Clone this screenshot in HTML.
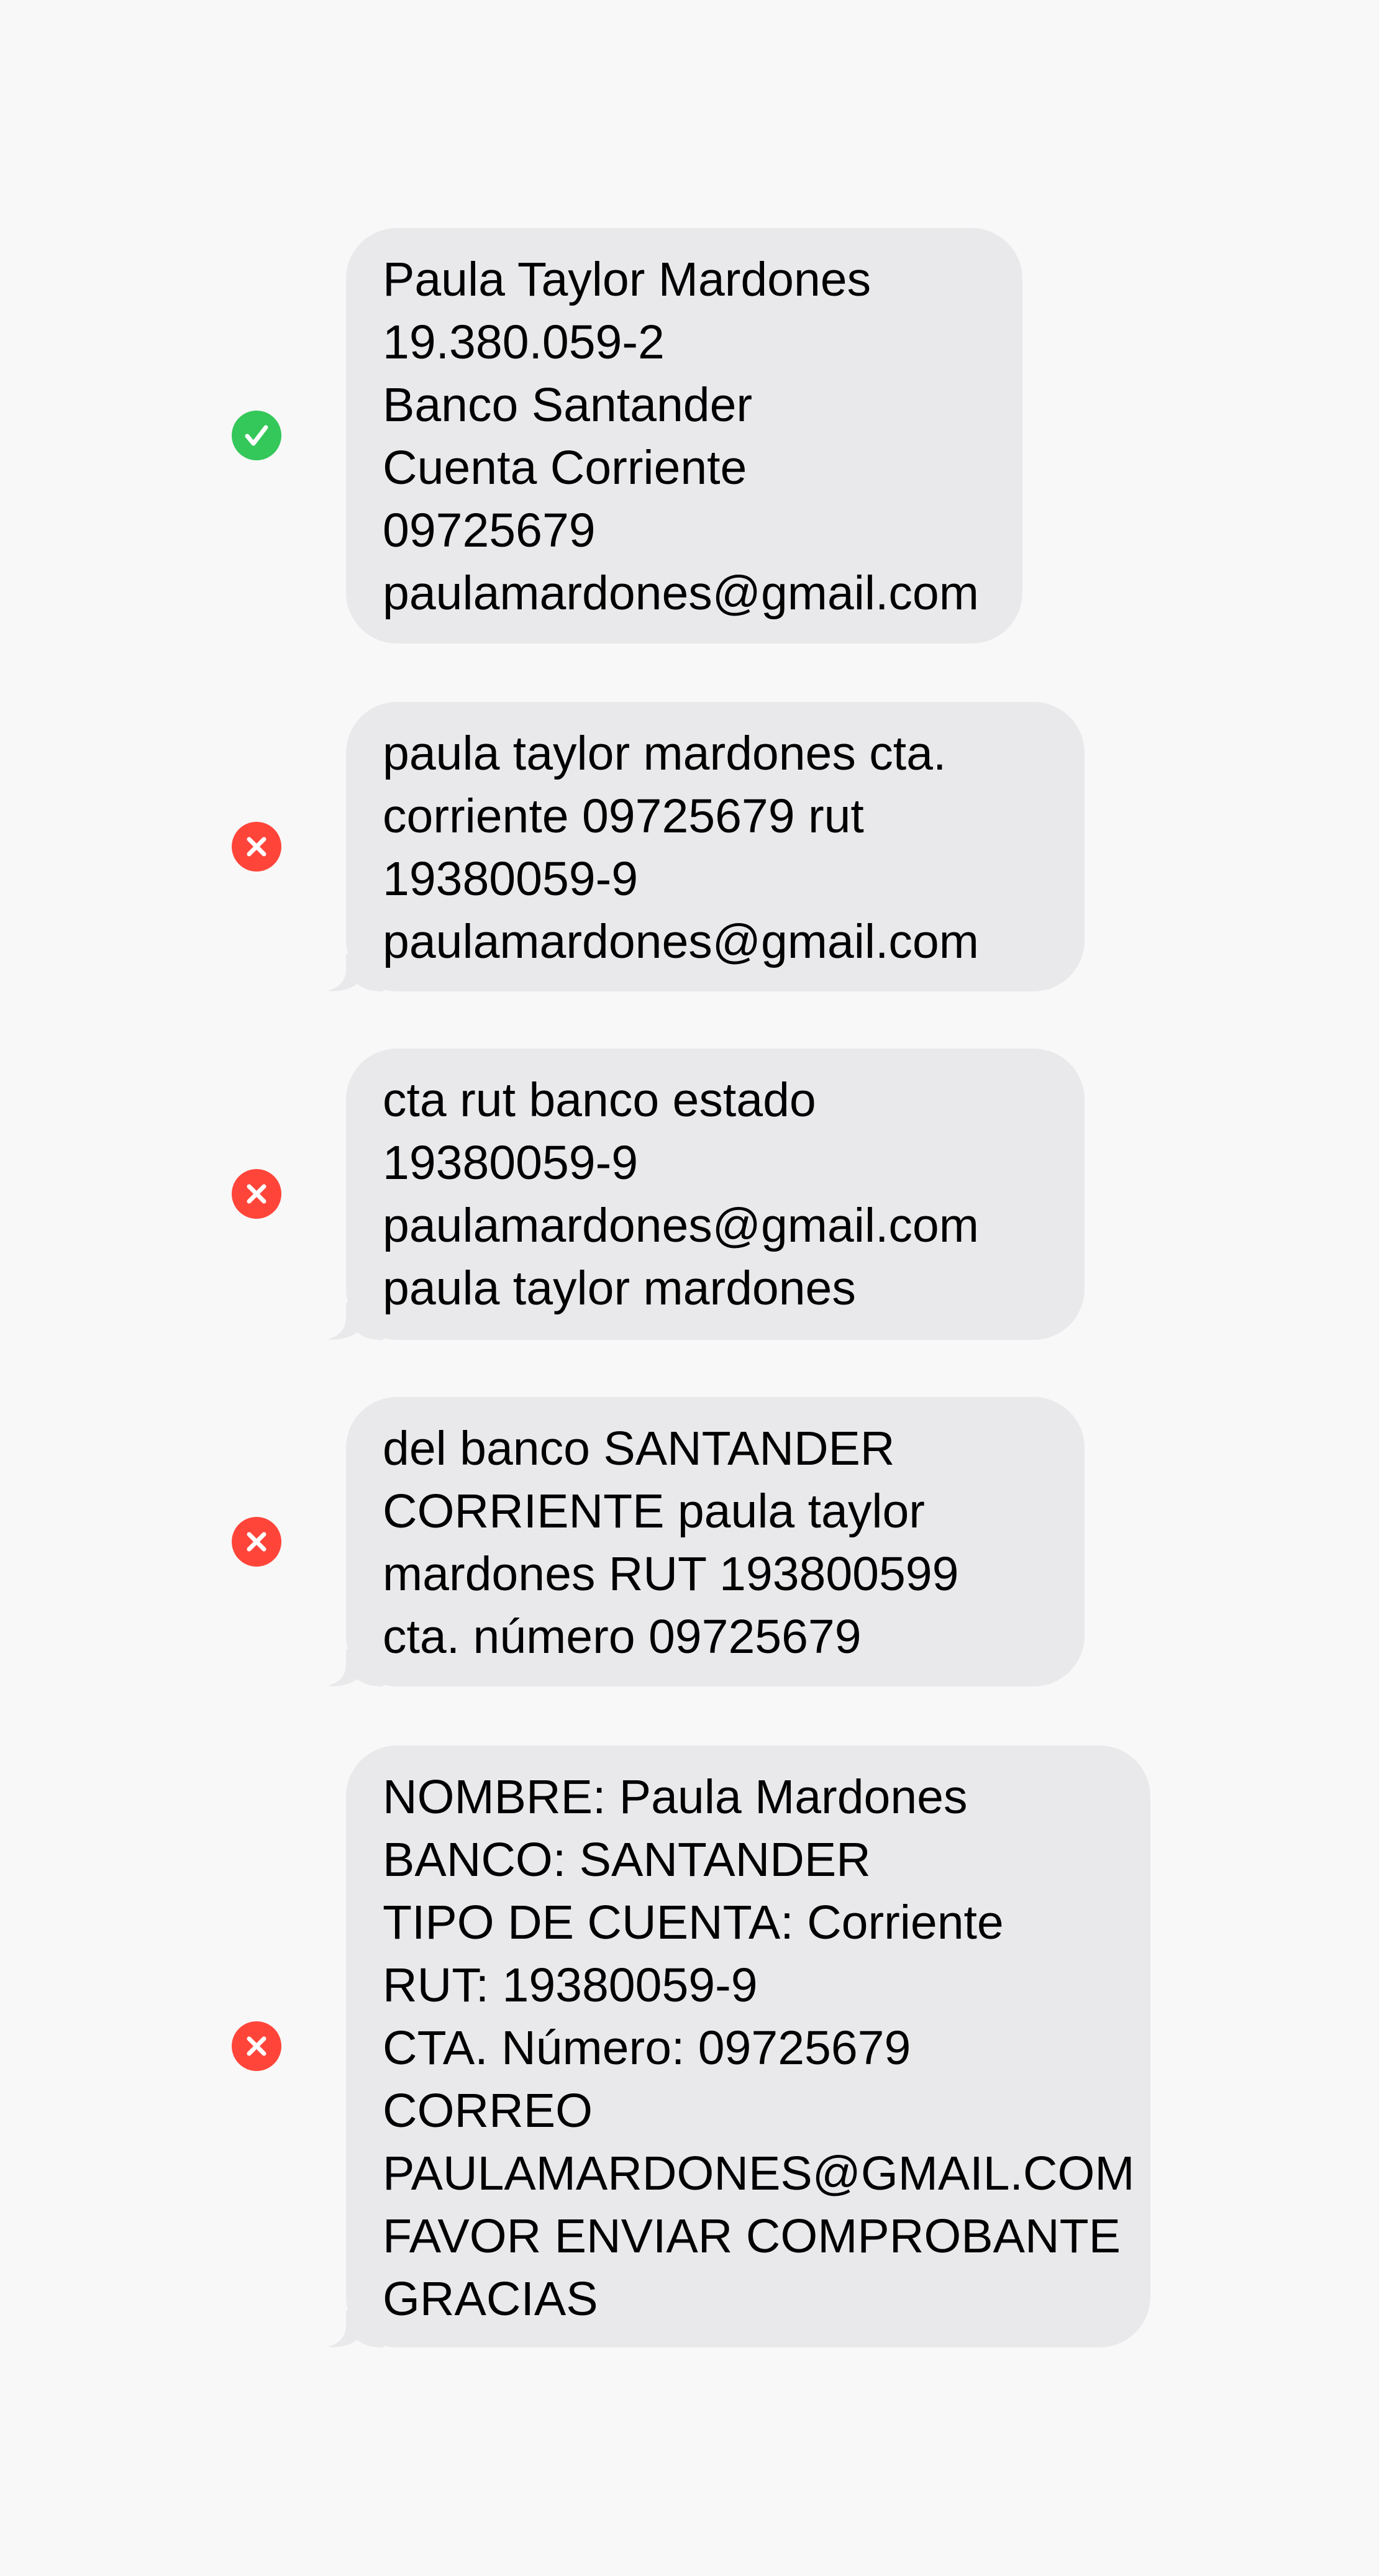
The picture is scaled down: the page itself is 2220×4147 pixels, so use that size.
<!DOCTYPE html>
<html><head><meta charset="utf-8">
<style>
html,body{margin:0;padding:0}
body{width:2220px;height:4147px;background:#f8f8f8;position:relative;font-family:"Liberation Sans",sans-serif;overflow:hidden}
.b{position:absolute;left:557px;background:#e9e9eb;border-radius:82px;box-sizing:border-box;padding:33px 0 31px 59px;font-size:77px;line-height:101px;color:#000;white-space:pre}
.t{position:absolute;left:-30px;bottom:0;width:90px;height:60px}
.i{position:absolute;left:373px;width:80px;height:80px;margin-top:-40px}
</style></head><body>

<div class="b" style="top:367px;width:1089px;height:669px">Paula Taylor Mardones
19.380.059-2
Banco Santander
Cuenta Corriente
09725679
paulamardones@gmail.com</div>

<div class="b" style="top:1130px;width:1189px;height:466px">paula taylor mardones cta.
corriente 09725679 rut
19380059-9
paulamardones@gmail.com<svg class="t" viewBox="0 0 90 60"><path d="M30 0 L30 24 C30 42 20 54 0 59 C18 61 36 57 48 48 C58 56 70 60 90 60 L90 0 Z" fill="#e9e9eb"/></svg></div>

<div class="b" style="top:1688px;width:1189px;height:469px">cta rut banco estado
19380059-9
paulamardones@gmail.com
paula taylor mardones<svg class="t" viewBox="0 0 90 60"><path d="M30 0 L30 24 C30 42 20 54 0 59 C18 61 36 57 48 48 C58 56 70 60 90 60 L90 0 Z" fill="#e9e9eb"/></svg></div>

<div class="b" style="top:2249px;width:1189px;height:466px">del banco SANTANDER
CORRIENTE paula taylor
mardones RUT 193800599
cta. número 09725679<svg class="t" viewBox="0 0 90 60"><path d="M30 0 L30 24 C30 42 20 54 0 59 C18 61 36 57 48 48 C58 56 70 60 90 60 L90 0 Z" fill="#e9e9eb"/></svg></div>

<div class="b" style="top:2810px;width:1295px;height:969px">NOMBRE: Paula Mardones
BANCO: SANTANDER
TIPO DE CUENTA: Corriente
RUT: 19380059-9
CTA. Número: 09725679
CORREO
PAULAMARDONES@GMAIL.COM
FAVOR ENVIAR COMPROBANTE
GRACIAS<svg class="t" viewBox="0 0 90 60"><path d="M30 0 L30 24 C30 42 20 54 0 59 C18 61 36 57 48 48 C58 56 70 60 90 60 L90 0 Z" fill="#e9e9eb"/></svg></div>

<svg class="i" style="top:701px" viewBox="0 0 80 80"><circle cx="40" cy="40" r="40" fill="#34c759"/><path d="M25 41 L35 53 L55 27" stroke="#fff" stroke-width="7" fill="none" stroke-linecap="round" stroke-linejoin="round"/></svg>
<svg class="i" style="top:1363px" viewBox="0 0 80 80"><circle cx="40" cy="40" r="40" fill="#ff453a"/><path d="M28 28 L52 52 M52 28 L28 52" stroke="#fff" stroke-width="7" stroke-linecap="round"/></svg>
<svg class="i" style="top:1922px" viewBox="0 0 80 80"><circle cx="40" cy="40" r="40" fill="#ff453a"/><path d="M28 28 L52 52 M52 28 L28 52" stroke="#fff" stroke-width="7" stroke-linecap="round"/></svg>
<svg class="i" style="top:2482px" viewBox="0 0 80 80"><circle cx="40" cy="40" r="40" fill="#ff453a"/><path d="M28 28 L52 52 M52 28 L28 52" stroke="#fff" stroke-width="7" stroke-linecap="round"/></svg>
<svg class="i" style="top:3294px" viewBox="0 0 80 80"><circle cx="40" cy="40" r="40" fill="#ff453a"/><path d="M28 28 L52 52 M52 28 L28 52" stroke="#fff" stroke-width="7" stroke-linecap="round"/></svg>

</body></html>
